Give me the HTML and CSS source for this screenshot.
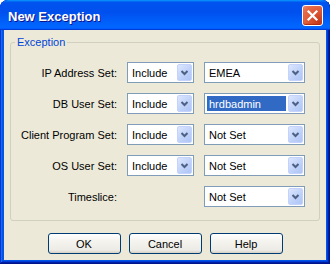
FILE: index.html
```
<!DOCTYPE html>
<html>
<head>
<meta charset="utf-8">
<link rel="stylesheet" href="styles.css">
</head>
<body>
<div class="window">
  <div class="titlebar">
    <span class="title">New Exception</span>
    <span class="close"><svg width="13" height="13" viewBox="0 0 13 13"><path d="M2.5 2.5 L10.5 10.5 M10.5 2.5 L2.5 10.5" stroke="#fff" stroke-width="2.2" stroke-linecap="square"/></svg></span>
  </div>
  <div class="content">
    <fieldset class="group">
      <legend class="legend">Exception</legend>
      <div class="grid">
        <div class="label">IP Address Set:</div>
        <div class="combo"><span class="text">Include</span><span class="btn"><svg width="13" height="15" viewBox="0 0 13 15"><path d="M3.5 6 L6.5 9 L9.5 6" fill="none" stroke="#4D6185" stroke-width="2"/></svg></span></div>
        <div class="combo"><span class="text">EMEA</span><span class="btn"><svg width="13" height="15" viewBox="0 0 13 15"><path d="M3.5 6 L6.5 9 L9.5 6" fill="none" stroke="#4D6185" stroke-width="2"/></svg></span></div>

        <div class="label">DB User Set:</div>
        <div class="combo"><span class="text">Include</span><span class="btn"><svg width="13" height="15" viewBox="0 0 13 15"><path d="M3.5 6 L6.5 9 L9.5 6" fill="none" stroke="#4D6185" stroke-width="2"/></svg></span></div>
        <div class="combo"><span class="text selected">hrdbadmin</span><span class="btn"><svg width="13" height="15" viewBox="0 0 13 15"><path d="M3.5 6 L6.5 9 L9.5 6" fill="none" stroke="#4D6185" stroke-width="2"/></svg></span></div>

        <div class="label">Client Program Set:</div>
        <div class="combo"><span class="text">Include</span><span class="btn"><svg width="13" height="15" viewBox="0 0 13 15"><path d="M3.5 6 L6.5 9 L9.5 6" fill="none" stroke="#4D6185" stroke-width="2"/></svg></span></div>
        <div class="combo"><span class="text">Not Set</span><span class="btn"><svg width="13" height="15" viewBox="0 0 13 15"><path d="M3.5 6 L6.5 9 L9.5 6" fill="none" stroke="#4D6185" stroke-width="2"/></svg></span></div>

        <div class="label">OS User Set:</div>
        <div class="combo"><span class="text">Include</span><span class="btn"><svg width="13" height="15" viewBox="0 0 13 15"><path d="M3.5 6 L6.5 9 L9.5 6" fill="none" stroke="#4D6185" stroke-width="2"/></svg></span></div>
        <div class="combo"><span class="text">Not Set</span><span class="btn"><svg width="13" height="15" viewBox="0 0 13 15"><path d="M3.5 6 L6.5 9 L9.5 6" fill="none" stroke="#4D6185" stroke-width="2"/></svg></span></div>

        <div class="label">Timeslice:</div>
        <div class="empty"></div>
        <div class="combo"><span class="text">Not Set</span><span class="btn"><svg width="13" height="15" viewBox="0 0 13 15"><path d="M3.5 6 L6.5 9 L9.5 6" fill="none" stroke="#4D6185" stroke-width="2"/></svg></span></div>
      </div>
    </fieldset>
    <div class="buttons">
      <div class="button">OK</div>
      <div class="button">Cancel</div>
      <div class="button">Help</div>
    </div>
  </div>
</div>
</body>
</html>
```
FILE: styles.css
```
html, body {
  margin: 0;
  padding: 0;
  background: #ffffff;
}
body {
  font-family: "Liberation Sans", Arial, sans-serif;
  font-size: 11px;
  color: #000;
}
.window {
  width: 330px;
  height: 264px;
  box-sizing: border-box;
  display: flex;
  flex-direction: column;
  border-radius: 8px 8px 0 0;
  overflow: hidden;
  background: #0055E5;
  box-shadow: inset -1px -1px #00138c, inset 1px 1px #0831d9, inset -2px -2px #001ea0, inset 2px 2px #166aee, inset -3px -3px #003bda, inset 3px 3px #0855dd;
}
.titlebar {
  height: 30px;
  flex: none;
  display: flex;
  align-items: center;
  padding: 0 7px 0 8px;
  background: linear-gradient(180deg, #0997ff, #0053ee 8%, #0050ee 40%, #06f 88%, #06f 93%, #005bff 95%, #003dd7 96%, #003dd7);
  border-radius: 8px 8px 0 0;
}
.title {
  flex: 1;
  color: #fff;
  font-weight: bold;
  font-size: 13px;
  text-shadow: 1px 1px #0F1089;
  padding-top: 2px;
}
.close {
  width: 19px;
  height: 19px;
  border: 1px solid #fff;
  border-radius: 3px;
  display: flex;
  align-items: center;
  justify-content: center;
  background: radial-gradient(circle at 85% 85%, #C4381A 0%, #D9532F 40%, #E76D4C 80%, #F08B6E 100%);
  box-shadow: inset 0 -1px 1px #B02B10;
}
.content {
  flex: 1;
  margin: 0 4px 4px 4px;
  background: #ECE9D8;
  display: flex;
  flex-direction: column;
}
.group {
  margin: 6px 6px 0 6px;
  border: 1px solid #D0D0BF;
  border-radius: 3px;
  padding: 14px 0 13px 0;
  min-width: 0;
}
.legend {
  margin-left: 4px;
  padding: 0 2px;
  color: #0046D5;
  line-height: 12px;
}
.grid {
  display: grid;
  grid-template-columns: 106px 67px 101px;
  grid-auto-rows: 21px;
  column-gap: 10px;
  row-gap: 10px;
}
.label {
  text-align: right;
  align-self: center;
  white-space: nowrap;
}
.combo {
  box-sizing: border-box;
  border: 1px solid #7F9DB9;
  background: #fff;
  display: flex;
  align-items: stretch;
  padding: 1px;
}
.text {
  flex: 1;
  margin: 1px 2px 1px 1px;
  padding-left: 2px;
  display: flex;
  align-items: center;
  white-space: nowrap;
  overflow: hidden;
}
.text.selected {
  background: #316AC5;
  color: #fff;
}
.btn {
  width: 15px;
  box-sizing: border-box;
  border: 1px solid #C3D3FD;
  border-radius: 2px;
  background: linear-gradient(135deg, #DCE6FE, #B9CDF8 70%, #AFC5F5);
  display: flex;
  align-items: center;
  justify-content: center;
}
.buttons {
  display: flex;
  justify-content: center;
  gap: 8px;
  margin-top: 12px;
}
.button {
  width: 73px;
  height: 21px;
  box-sizing: border-box;
  border: 1px solid #003C74;
  border-radius: 3px;
  background: linear-gradient(180deg, #ffffff, #F4F3EE 40%, #ECEBE6 85%, #D6D0C5);
  display: flex;
  align-items: center;
  justify-content: center;
}
```
